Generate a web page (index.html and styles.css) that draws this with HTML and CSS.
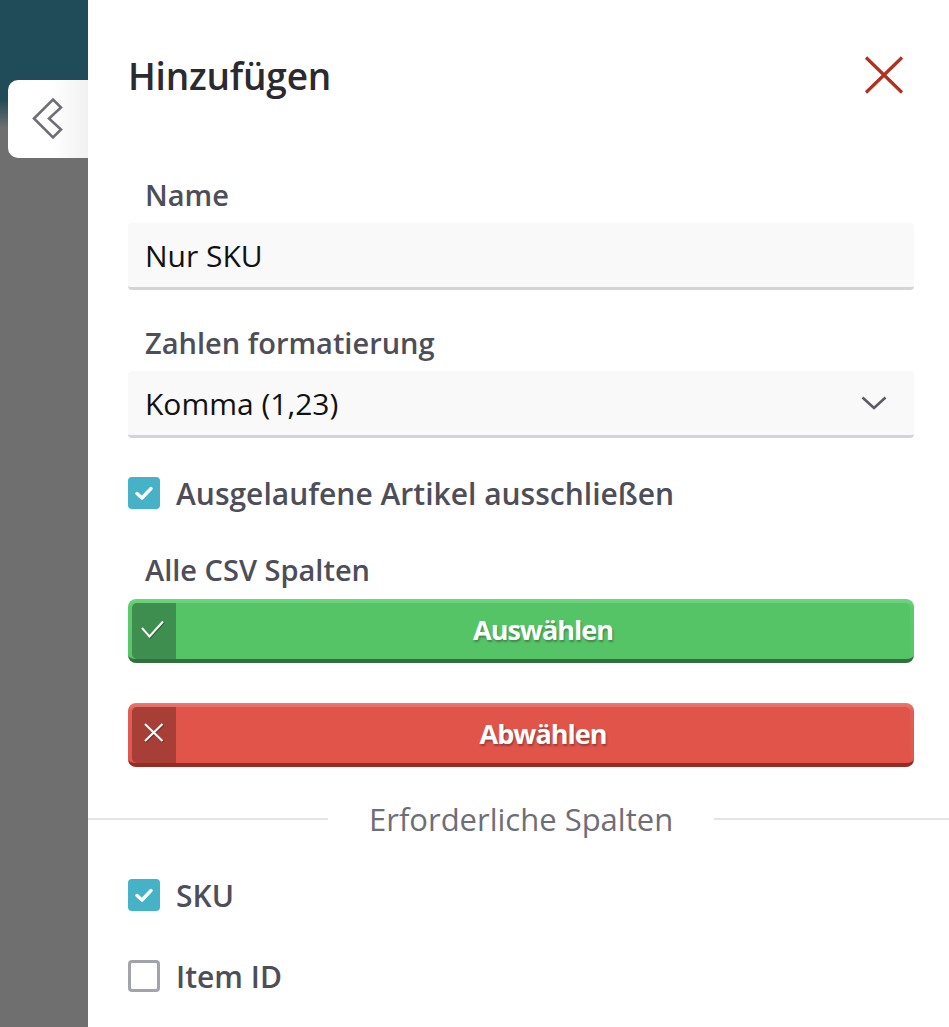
FILE: index.html
```html
<!DOCTYPE html>
<html lang="de">
<head>
    <meta charset="UTF-8">
    <meta name="viewport" content="width=device-width, initial-scale=1.0">
    <title>Hinzufügen</title>
    <link rel="stylesheet" href="styles.css">
</head>
<body>
    <div class="backdrop">
        <div class="drawerTab">
            <svg width="80" height="78" viewBox="0 0 80 78">
                <polygon points="26,38.5 45,19.5 53,27.5 41,38.5 53,49.5 45,57.5" fill="none" stroke="#6e6e76" stroke-width="2.6" stroke-linejoin="miter"/>
            </svg>
        </div>
    </div>
    <div class="panel">
        <div class="header">
            <div class="title">Hinzufügen</div>
            <div class="close">
                <svg width="40" height="38" viewBox="0 0 40 38">
                    <path d="M2 1.5 L38 36.5 M38 1.5 L2 36.5" stroke="#b3301f" stroke-width="3.2" fill="none"/>
                </svg>
            </div>
        </div>

        <div class="field first">
            <div class="label">Name</div>
            <div class="input">Nur SKU</div>
        </div>

        <div class="field">
            <div class="label">Zahlen formatierung</div>
            <div class="input select">
                <span>Komma (1,23)</span>
                <svg width="26" height="14" viewBox="0 0 26 14">
                    <path d="M1.5 1.5 L13 12 L24.5 1.5" stroke="#5b5b65" stroke-width="2.6" fill="none"/>
                </svg>
            </div>
        </div>

        <div class="checkRow expired">
            <div class="checkbox checked">
                <svg width="20" height="16" viewBox="0 0 20 16"><path d="M3 8.5 L8 13 L17 3.5" stroke="#fff" stroke-width="3.4" fill="none" stroke-linecap="round" stroke-linejoin="round"/></svg>
            </div>
            <span>Ausgelaufene Artikel ausschließen</span>
        </div>

        <div class="label allCols">Alle CSV Spalten</div>
        <div class="btn green">
            <div class="btnInner">
                <div class="btnIcon">
                    <svg width="44" height="56" viewBox="0 0 44 56"><path d="M10 25 L17.5 33.5 L31 18.5" stroke="#fff" stroke-width="2" fill="none"/></svg>
                </div>
                <div class="btnText">Auswählen</div>
            </div>
        </div>
        <div class="btn red">
            <div class="btnInner">
                <div class="btnIcon">
                    <svg width="44" height="56" viewBox="0 0 44 56"><path d="M13 17 L30.5 34 M30.5 17 L13 34" stroke="#fff" stroke-width="2" fill="none"/></svg>
                </div>
                <div class="btnText">Abwählen</div>
            </div>
        </div>

        <div class="divider">
            <div class="line"></div>
            <span>Erforderliche Spalten</span>
            <div class="line"></div>
        </div>

        <div class="checkRow sku">
            <div class="checkbox checked">
                <svg width="20" height="16" viewBox="0 0 20 16"><path d="M3 8.5 L8 13 L17 3.5" stroke="#fff" stroke-width="3.4" fill="none" stroke-linecap="round" stroke-linejoin="round"/></svg>
            </div>
            <span>SKU</span>
        </div>
        <div class="checkRow itemId">
            <div class="checkbox"></div>
            <span>Item ID</span>
        </div>
    </div>
</body>
</html>
```

FILE: styles.css
```css
:root{
    --labelColor: #4e4e58;
    --check: #46b2c8;
}
html, body{
    height: 100%;
}
body{
    margin: 0;
    display: flex;
    overflow: hidden;
    font-family: 'Open Sans', 'Noto Sans', sans-serif;
    background: #fff;
}
.backdrop{
    width: 88px;
    flex-shrink: 0;
    background: linear-gradient(to bottom, #1f4c58 0px, #1f4c58 100px, #6f6f6f 128px, #6f6f6f 100%);
    padding-top: 80px;
    padding-left: 8px;
    box-sizing: border-box;
}
.drawerTab{
    width: 80px;
    height: 78px;
    border-radius: 10px 0 0 10px;
    background: linear-gradient(to right, #ffffff 55%, #f1f1f1 100%);
}
.drawerTab svg{
    display: block;
}
.panel{
    flex: 1;
    display: flex;
    flex-direction: column;
    padding: 40px 35px 0 40px;
}
.header{
    height: 70px;
    display: flex;
    align-items: center;
    justify-content: space-between;
}
.title{
    font-size: 37px;
    font-weight: 600;
    color: #2a2a2f;
    letter-spacing: -0.2px;
}
.close{
    margin-right: 10px;
    display: flex;
}
.field{
    display: flex;
    flex-direction: column;
    margin-top: 35px;
}
.field.first{
    margin-top: 67px;
}
.label{
    height: 36px;
    line-height: 36px;
    font-size: 29px;
    font-weight: 600;
    color: var(--labelColor);
    padding-left: 17px;
    margin-bottom: 10px;
}
.input{
    height: 64px;
    display: flex;
    align-items: center;
    justify-content: space-between;
    background: #f9f9f9;
    border-bottom: 3px solid #d4d4d8;
    border-radius: 4px;
    padding: 0 27px 0 17px;
    font-size: 30px;
    color: #111;
}
.checkRow{
    height: 36px;
    display: flex;
    align-items: center;
    gap: 16px;
    font-size: 30px;
    font-weight: 600;
    color: var(--labelColor);
}
.expired{
    margin-top: 37px;
}
.sku{
    margin-top: 40px;
}
.itemId{
    margin-top: 45px;
}
.checkbox{
    width: 32px;
    height: 32px;
    box-sizing: border-box;
    border-radius: 4px;
    border: 3px solid #a3a3ab;
    display: flex;
    align-items: center;
    justify-content: center;
    flex-shrink: 0;
}
.checkbox.checked{
    border: none;
    background: var(--check);
}
.allCols{
    margin-top: 41px;
    margin-bottom: 11px;
}
.btn{
    height: 64px;
    box-sizing: border-box;
    border-radius: 8px;
    padding: 4px 4px 0 4px;
    display: flex;
}
.btn + .btn{
    margin-top: 40px;
}
.btnInner{
    flex: 1;
    display: flex;
    border-radius: 5px;
    overflow: hidden;
}
.btnIcon{
    width: 44px;
    display: flex;
    align-items: center;
    justify-content: center;
}
.btnIcon svg{
    filter: drop-shadow(1px 1px 0 rgba(0,0,0,0.25));
}
.btnText{
    flex: 1;
    display: flex;
    align-items: center;
    justify-content: center;
    padding-bottom: 4px;
    font-size: 27px;
    font-weight: 700;
    letter-spacing: -1px;
    color: #fff;
    text-shadow: 1px 2px 2px rgba(0,0,0,0.3);
}
.green{
    background: linear-gradient(to bottom, #6fd680 0px, #5cca6d 8px, #57c568 100%);
    border-bottom: 4px solid #316f3c;
}
.green .btnInner{
    background: #55c466;
}
.green .btnIcon{
    background: #3e8f4f;
}
.red{
    background: linear-gradient(to bottom, #e97a72 0px, #e25d53 8px, #e0564b 100%);
    border-bottom: 4px solid #952b22;
}
.red .btnInner{
    background: #e0544a;
}
.red .btnIcon{
    background: #a73f37;
}
.divider{
    height: 36px;
    margin: 34px -35px 0 -40px;
    display: flex;
    align-items: center;
    gap: 41px;
    font-size: 31px;
    color: #6e6e77;
}
.divider .line{
    height: 2px;
    background: #e4e4e4;
}
.divider .line:first-child{
    width: 240px;
}
.divider .line:last-child{
    flex: 1;
}
```
